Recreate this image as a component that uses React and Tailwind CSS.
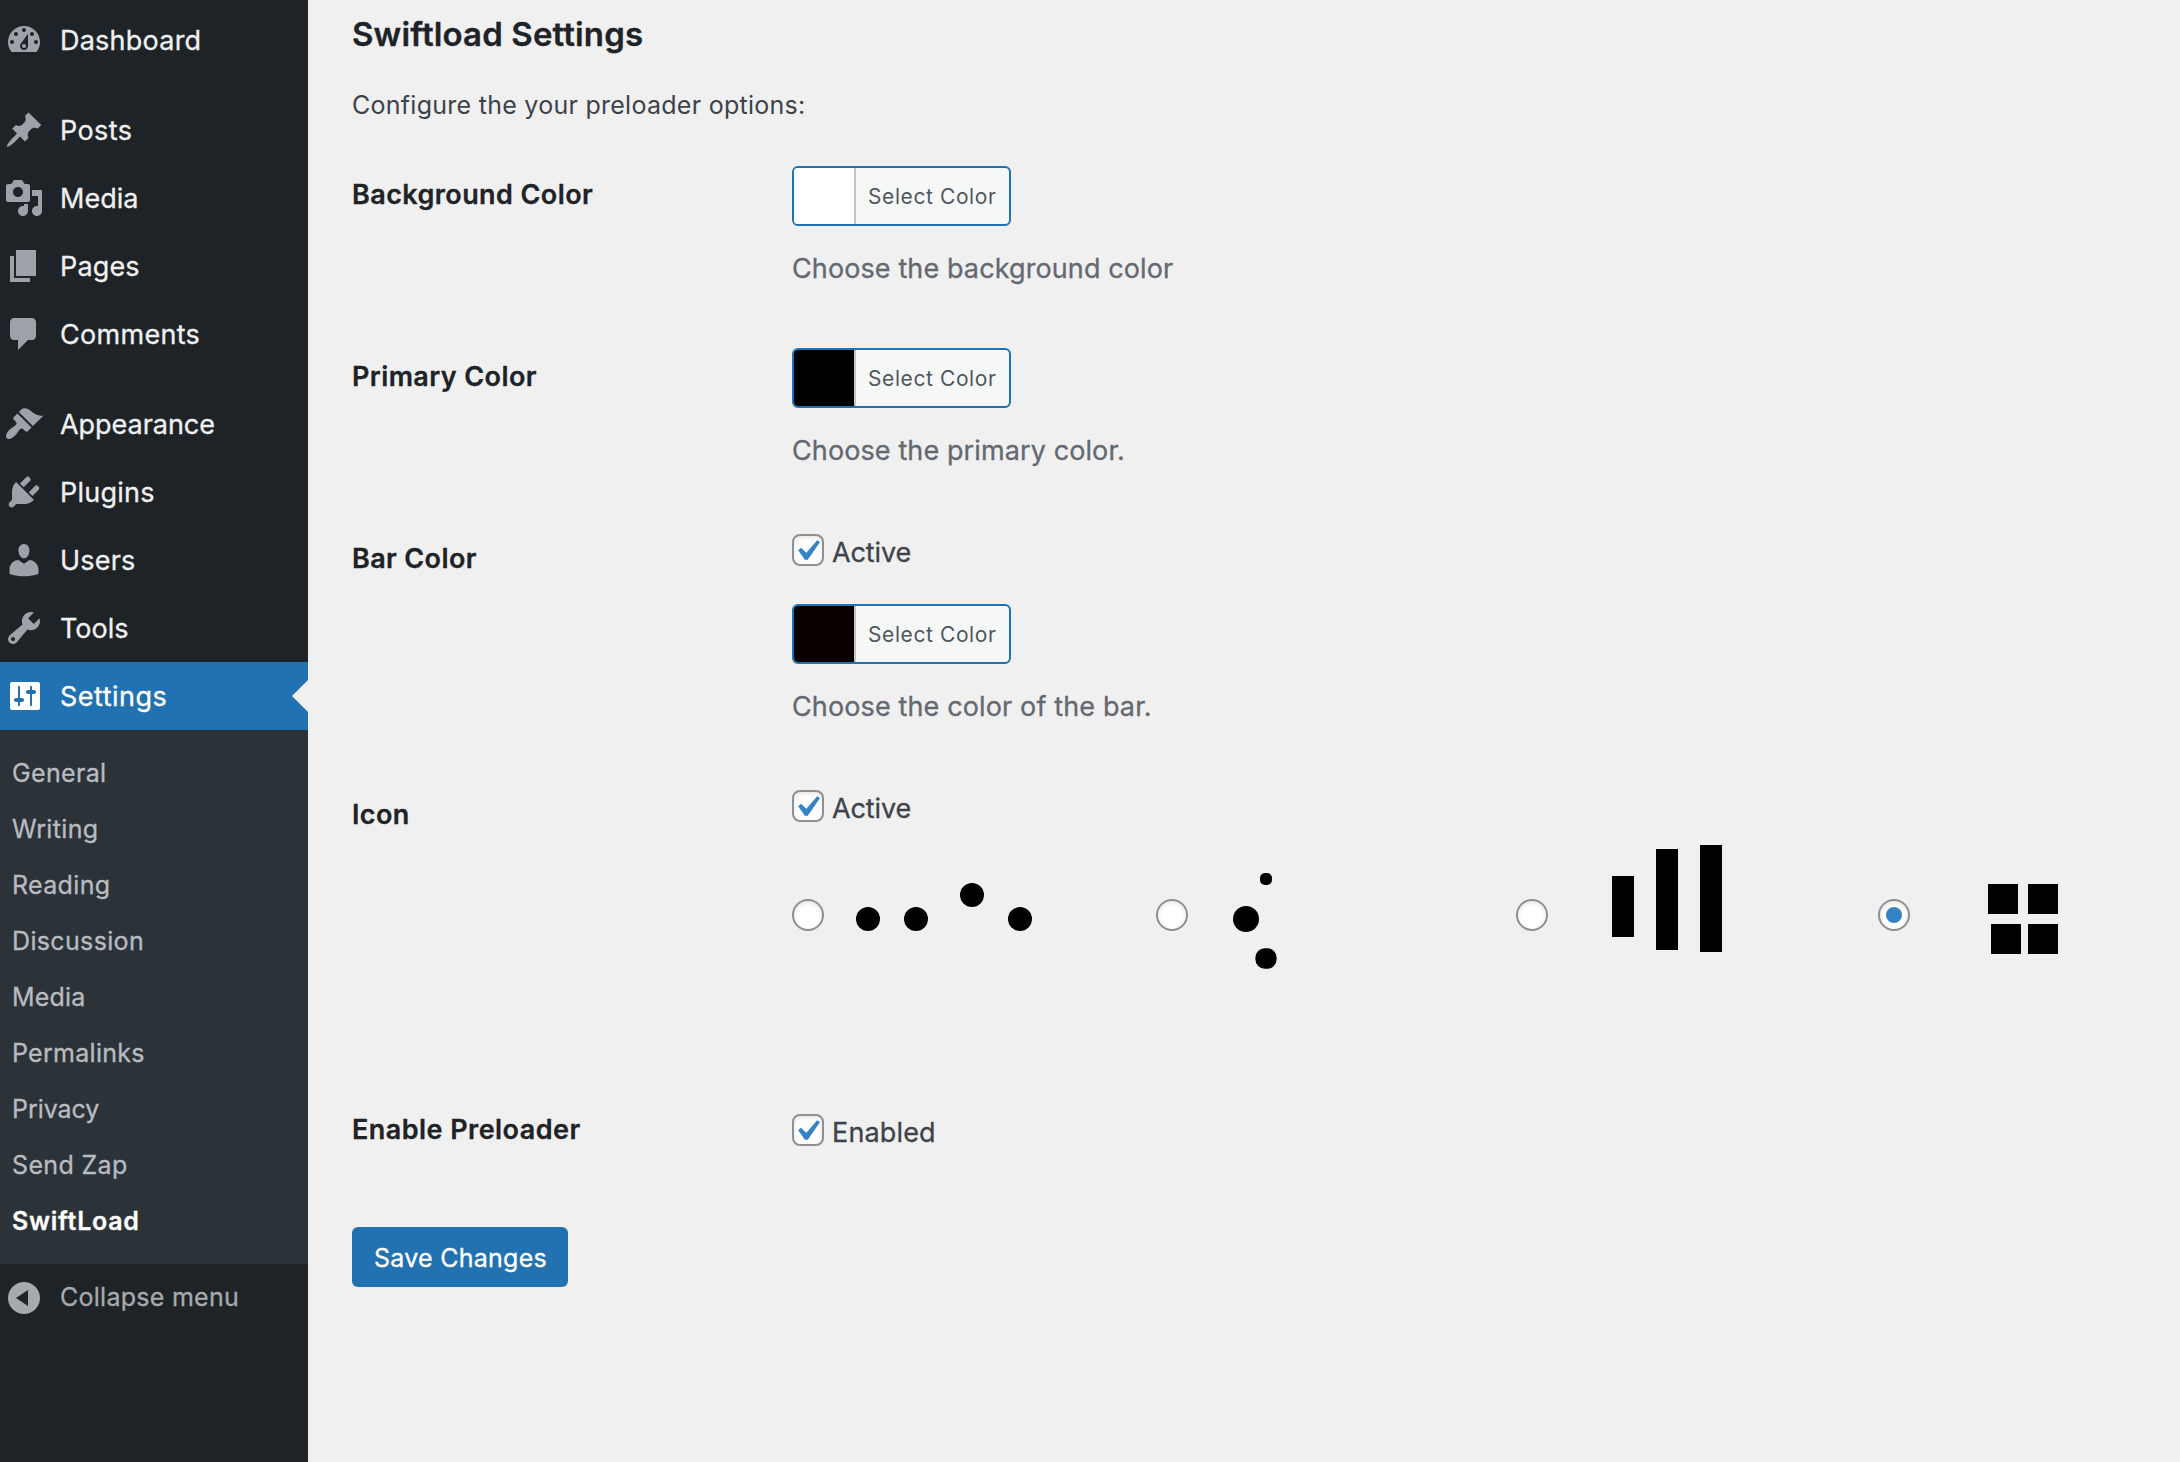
const icons = {
  dashboard: (
    <>
      <path
        fillRule="evenodd"
        d="M3.76 16h12.48A7.95 7.95 0 0 0 18 11c0-4.42-3.58-8-8-8s-8 3.58-8 8c0 1.89.65 3.62 1.76 5zM10 4c.55 0 1 .45 1 1s-.45 1-1 1-1-.45-1-1 .45-1 1-1zM6 6c.55 0 1 .45 1 1s-.45 1-1 1-1-.45-1-1 .45-1 1-1zm8 0c.55 0 1 .45 1 1s-.45 1-1 1-1-.45-1-1 .45-1 1-1zM4 10c.55 0 1 .45 1 1s-.45 1-1 1-1-.45-1-1 .45-1 1-1zm12 0c.55 0 1 .45 1 1s-.45 1-1 1-1-.45-1-1 .45-1 1-1zm-4-3.1V13c0 1.1-.9 2-2 2s-2-.9-2-2c0-.48.17-.92.46-1.27z"
      />
      <circle cx="10" cy="13" r="1" />
    </>
  ),
  posts: (
    <path d="M10.44 3.02l1.82-1.82 6.36 6.35-1.83 1.82c-1.05-.68-2.48-.57-3.41.36l-.75.75c-.92.93-1.04 2.35-.35 3.41l-1.83 1.82-2.41-2.41-2.8 2.79c-.42.42-3.38 2.71-3.8 2.29s1.86-3.39 2.28-3.81l2.79-2.79L4.1 9.36l1.83-1.82c1.05.69 2.48.57 3.4-.36l.75-.75c.93-.92 1.05-2.35.36-3.41z" />
  ),
  media: (
    <path
      fillRule="evenodd"
      d="M13 11V4c0-.55-.45-1-1-1h-1.67L9 1H5L3.67 3H2c-.55 0-1 .45-1 1v7c0 .55.45 1 1 1h10c.55 0 1-.45 1-1zM7 4.5c1.38 0 2.5 1.12 2.5 2.5S8.38 9.5 7 9.5 4.5 8.38 4.5 7 5.62 4.5 7 4.5zM14 6h5v10.5c0 1.38-1.12 2.5-2.5 2.5S14 17.88 14 16.5s1.12-2.5 2.5-2.5c.17 0 .34.02.5.05V9h-3V6zm-4 8.05V13h2v3.5c0 1.38-1.12 2.5-2.5 2.5S7 17.88 7 16.5 8.12 14 9.5 14c.17 0 .34.02.5.05z"
    />
  ),
  pages: <path d="M6 15V2h10v13H6zm-1 1h8v2H3V5h2v11z" />,
  comments: (
    <path d="M5 2h9c1.1 0 2 .9 2 2v7c0 1.1-.9 2-2 2h-2l-5 5v-5H5c-1.1 0-2-.9-2-2V4c0-1.1.9-2 2-2z" />
  ),
  appearance: (
    <path d="M14.48 11.06L7.41 3.99l1.5-1.5c.5-.56 2.3-.47 3.51.32 1.21.8 1.43 1.28 2.91 2.1 1.18.64 2.45 1.26 4.45.85zm-.71.71L6.7 4.7 4.93 6.47c-.39.39-.39 1.02 0 1.41l1.06 1.06c.39.39.39 1.03 0 1.42-.6.6-1.43 1.11-2.21 1.69-.35.26-.7.53-1.01.84C1.43 14.23.4 16.08 1.4 17.07c.99 1 2.84-.03 4.18-1.36.31-.31.58-.66.85-1.02.57-.78 1.08-1.61 1.69-2.21.39-.39 1.02-.39 1.41 0l1.06 1.06c.39.39 1.02.39 1.41 0z" />
  ),
  plugins: (
    <path d="M13.11 4.36L9.87 7.6 8 5.73l3.24-3.24c.35-.34 1.05-.2 1.56.32.52.51.66 1.21.31 1.55zm-8 1.77l.91-1.12 9.01 9.01-1.19.84c-.71.71-2.63 1.16-3.82 1.16H6.14L4.9 17.26c-.59.59-1.54.59-2.12 0-.59-.58-.59-1.53 0-2.12l1.24-1.24v-3.88c0-1.13.4-3.19 1.09-3.89zm7.26 3.97l3.24-3.24c.34-.35 1.04-.21 1.55.31.52.51.66 1.21.31 1.55l-3.24 3.25z" />
  ),
  users: (
    <path d="M10 9.25c-2.27 0-2.73-3.44-2.73-3.44C7 4.02 7.82 2 9.97 2c2.16 0 2.98 2.02 2.71 3.81 0 0-.41 3.44-2.68 3.44zm0 2.57L12.72 10c2.39 0 4.52 2.33 4.52 4.53v2.49s-3.65 1.13-7.24 1.13c-3.65 0-7.24-1.13-7.24-1.13v-2.49c0-2.25 1.94-4.48 4.47-4.48z" />
  ),
  tools: (
    <path
      fillRule="evenodd"
      d="M16.68 9.77c-1.34 1.34-3.3 1.67-4.95.99l-5.41 6.52c-.99.99-2.59.99-3.58 0s-.99-2.59 0-3.57l6.52-5.42c-.68-1.65-.35-3.61.99-4.95 1.28-1.28 3.12-1.62 4.72-1.06l-2.89 2.89 2.82 2.82 2.86-2.87c.53 1.58.18 3.39-1.08 4.65zM3.81 16.21c.4.39 1.04.39 1.43 0 .4-.4.4-1.04 0-1.43-.39-.4-1.03-.4-1.43 0-.39.39-.39 1.03 0 1.43z"
    />
  ),
  settings: (
    <path
      fillRule="evenodd"
      d="M18 16V4c0-.55-.45-1-1-1H4c-.55 0-1 .45-1 1v12c0 .55.45 1 1 1h13c.55 0 1-.45 1-1zM8 11h1c.55 0 1 .45 1 1s-.45 1-1 1H8v1.5c0 .28-.22.5-.5.5s-.5-.22-.5-.5V13H6c-.55 0-1-.45-1-1s.45-1 1-1h1V5.5c0-.28.22-.5.5-.5s.5.22.5.5V11zm5-2h-1c-.55 0-1-.45-1-1s.45-1 1-1h1V5.5c0-.28.22-.5.5-.5s.5.22.5.5V7h1c.55 0 1 .45 1 1s-.45 1-1 1h-1v5.5c0 .28-.22.5-.5.5s-.5-.22-.5-.5V9z"
    />
  ),
  collapse: (
    <path fillRule="evenodd" d="M10 2a8 8 0 1 0 0 16 8 8 0 0 0 0-16zM6 10l6-4v8z" />
  ),
};

function Icon({ name, className = "" }) {
  return (
    <svg viewBox="0 0 20 20" className={`size-10 shrink-0 fill-current ${className}`}>
      {icons[name]}
    </svg>
  );
}

const menuGroups = [
  [{ icon: "dashboard", label: "Dashboard", tracking: "tracking-[0.234px]" }],
  [
    { icon: "posts", label: "Posts", tracking: "tracking-[0.4px]" },
    { icon: "media", label: "Media", tracking: "tracking-[0.024px]" },
    { icon: "pages", label: "Pages", tracking: "tracking-[0.149px]" },
    { icon: "comments", label: "Comments", tracking: "tracking-[0.3px]" },
  ],
  [
    { icon: "appearance", label: "Appearance", tracking: "tracking-[-0.04px]" },
    { icon: "plugins", label: "Plugins", tracking: "tracking-[0.25px]" },
    { icon: "users", label: "Users", tracking: "tracking-[0.2px]" },
    { icon: "tools", label: "Tools", tracking: "tracking-[0.016px]" },
    { icon: "settings", label: "Settings", tracking: "tracking-[0.47px]", active: true },
  ],
];

const submenu = [
  { label: "General", tracking: "tracking-[0.33px]" },
  { label: "Writing", tracking: "tracking-[0.35px]" },
  { label: "Reading", tracking: "tracking-[0.34px]" },
  { label: "Discussion", tracking: "tracking-[0.35px]" },
  { label: "Media", tracking: "tracking-[0.195px]" },
  { label: "Permalinks", tracking: "tracking-[0.28px]" },
  { label: "Privacy", tracking: "tracking-[-0.047px]" },
  { label: "Send Zap", tracking: "tracking-[0.359px]" },
  { label: "SwiftLoad", tracking: "tracking-[0.74px]", current: true },
];

function MenuItem({ icon, label, tracking, active }) {
  return (
    <li
      className={`relative flex h-[68px] items-center pl-1 ${active ? "bg-[#2271b1] text-white" : "text-[#f0f0f1]"}`}
    >
      <Icon name={icon} className={active ? "text-white" : "text-[#9ca2a7]"} />
      <span className={`ml-4 pt-0.5 text-[27px] leading-9 ${tracking}`}>{label}</span>
      {active && (
        <span className="absolute right-0 top-[18px] border-y-[16px] border-r-[16px] border-y-transparent border-r-[#f0f0f0]" />
      )}
    </li>
  );
}

function Sidebar() {
  return (
    <nav className="w-[308px] shrink-0 bg-[#1d2327] pt-1.5">
      <div className="flex flex-col gap-[22px]">
        {menuGroups.map((group) => (
          <ul key={group[0].label}>
            {group.map((item) => (
              <MenuItem key={item.label} {...item} />
            ))}
          </ul>
        ))}
      </div>
      <ul className="bg-[#2c3338] pt-3.5 pb-4">
        {submenu.map(({ label, tracking, current }) => (
          <li
            key={label}
            className={`h-14 pl-3 pt-px text-[25px] leading-[56px] ${tracking} ${current ? "font-semibold text-white" : "text-[#b8bcc0]"}`}
          >
            {label}
          </li>
        ))}
      </ul>
      <div className="flex h-[68px] items-center pl-1 text-[#a7aaad]">
        <Icon name="collapse" />
        <span className="ml-4 -mt-0.5 text-[25px] leading-9 tracking-[0.27px]">Collapse menu</span>
      </div>
    </nav>
  );
}

function Row({ label, tracking, height, children }) {
  return (
    <div className={`flex ${height}`}>
      <div
        className={`w-[440px] shrink-0 pt-[41px] text-[27px] leading-9 font-semibold text-[#1d2327] ${tracking}`}
      >
        {label}
      </div>
      <div className="grow">{children}</div>
    </div>
  );
}

function ColorButton({ swatch }) {
  return (
    <button className="flex h-[60px] w-[219px] overflow-hidden rounded-md border-2 border-[#2271b1] bg-[#f6f7f7]">
      <span className={`h-full w-[60px] shrink-0 ${swatch}`} />
      <span className="h-full grow border-l-2 border-[#c3c4c7] pl-3 text-left text-[21px] leading-[58px] tracking-[0.597px] text-[#50575e]">
        Select Color
      </span>
    </button>
  );
}

function Description({ tracking, children }) {
  return (
    <p className={`mt-[23px] text-[27px] leading-10 text-[#646970] ${tracking}`}>{children}</p>
  );
}

function Checkbox({ label, tracking }) {
  return (
    <label className="flex h-9 items-start">
      <span className="relative size-8 shrink-0 rounded-lg border-2 border-[#8c8f94] bg-white shadow-[inset_0_2px_4px_rgba(0,0,0,0.1)]">
        <svg viewBox="0 0 20 20" className="absolute -left-2 -top-1.5 size-[42px] max-w-none fill-[#3582c4]">
          <path d="M14.83 4.89l1.34.94-5.81 8.38H9.02L5.78 9.67l1.34-1.25 2.57 2.4z" />
        </svg>
      </span>
      <span className={`ml-2 mt-px text-[27px] leading-9 text-[#3c434a] ${tracking}`}>{label}</span>
    </label>
  );
}

function IconOption({ width, checked, children }) {
  return (
    <label className={`flex items-start ${width}`}>
      <span className="mt-[54px] flex size-8 shrink-0 items-center justify-center rounded-full border-2 border-[#8c8f94] bg-white shadow-[inset_0_2px_4px_rgba(0,0,0,0.1)]">
        {checked && <span className="size-4 rounded-full bg-[#3582c4]" />}
      </span>
      <svg width="240" height="126" viewBox="0 0 240 126" className="shrink-0 fill-black">
        {children}
      </svg>
    </label>
  );
}

export default function App() {
  return (
    <div className="flex h-[1462px] w-[2180px] overflow-hidden bg-[#f0f0f0] font-['Inter',sans-serif] [-webkit-text-stroke:0.3px]">
      <Sidebar />
      <main className="grow pl-11 pt-2.5">
        <h2 className="text-[33px] leading-[48px] font-semibold tracking-[0.13px] text-[#1d2327]">
          Swiftload Settings
        </h2>
        <p className="mt-[27px] text-[25px] leading-10 tracking-[0.266px] text-[#3c434a] [-webkit-text-stroke:0px]">
          Configure the your preloader options:
        </p>

        <div className="mt-[11px] [&_button]:[-webkit-text-stroke:0px]">
          <Row label="Background Color" tracking="tracking-[0.414px]" height="h-[182px]">
            <div className="pt-[30px]">
              <ColorButton swatch="bg-white" />
              <Description tracking="tracking-[0.107px]">Choose the background color</Description>
            </div>
          </Row>
          <Row label="Primary Color" tracking="tracking-[0.4px]" height="h-[182px]">
            <div className="pt-[30px]">
              <ColorButton swatch="bg-black" />
              <Description tracking="tracking-[0.107px]">Choose the primary color.</Description>
            </div>
          </Row>
          <Row label="Bar Color" tracking="tracking-[0.38px]" height="h-[256px]">
            <div className="pt-[34px]">
              <Checkbox label="Active" tracking="tracking-[-0.1px]" />
              <div className="mt-[34px]">
                <ColorButton swatch="bg-[#0a0000]" />
              </div>
              <Description tracking="tracking-[0.13px]">Choose the color of the bar.</Description>
            </div>
          </Row>
          <Row label="Icon" tracking="tracking-[0.36px]" height="h-[315px]">
            <div className="pt-[34px]">
              <Checkbox label="Active" tracking="tracking-[-0.1px]" />
              <div className="mt-[19px] flex">
                <IconOption width="w-[364px]">
                  <circle cx="44" cy="74" r="12" />
                  <circle cx="92" cy="74" r="12" />
                  <circle cx="148" cy="50" r="12" />
                  <circle cx="196" cy="74" r="12" />
                </IconOption>
                <IconOption width="w-[360px]">
                  <rect x="72" y="28" width="12" height="12" rx="5" />
                  <circle cx="58" cy="74" r="13" />
                  <rect x="67.4" y="103.2" width="21.2" height="20.6" rx="9.3" />
                </IconOption>
                <IconOption width="w-[362px]">
                  <rect x="64" y="31" width="22" height="61" />
                  <rect x="108" y="4" width="22" height="101" />
                  <rect x="152" y="0" width="22" height="107" />
                </IconOption>
                <IconOption width="w-[272px]" checked>
                  <rect x="78" y="39" width="30" height="30" />
                  <rect x="118" y="39" width="30" height="30" />
                  <rect x="81" y="79" width="30" height="30" />
                  <rect x="118" y="79" width="30" height="30" />
                </IconOption>
              </div>
            </div>
          </Row>
          <Row label="Enable Preloader" tracking="tracking-[0.45px]" height="h-[156px]">
            <div className="pt-[43px]">
              <Checkbox label="Enabled" tracking="tracking-[0.16px]" />
            </div>
          </Row>
        </div>

        <button className="h-[60px] w-[216px] rounded-md bg-[#2271b1] pl-px pt-0.5 text-[25px] leading-[58px] tracking-[0.25px] text-white">
          Save Changes
        </button>
      </main>
    </div>
  );
}
